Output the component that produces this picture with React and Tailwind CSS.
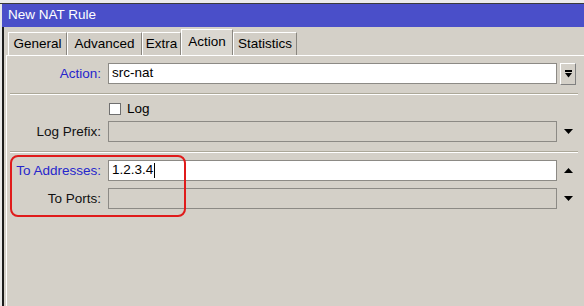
import React from "react";

function Arrow({ up = false }) {
  return (
    <svg width="9" height="5" viewBox="0 0 9 5" className="block">
      <path d={up ? "M4.5 0 L9 5 L0 5 Z" : "M0 0 L9 0 L4.5 5 Z"} fill="#000" />
    </svg>
  );
}

function Row({ label, blue, disabled, value, caret, side, className = "" }) {
  return (
    <div className={`flex items-center h-[21px] ${className}`}>
      <div className={`w-[94px] text-right leading-none text-[13.5px] ${blue ? "text-[#2626cc]" : "text-[#111]"}`}>{label}</div>
      <div
        className={`ml-[7px] w-[449px] h-full flex items-center pl-[3px] border border-[#8c8a85] text-[13.5px] ${
          disabled ? "bg-[#d4d0c8]" : "bg-white"
        }`}
      >
        {value}
        {caret && <span className="ml-[1px] w-[1px] h-[15px] bg-black" />}
      </div>
      <div className="ml-[3px] w-[16px] flex justify-center">{side}</div>
    </div>
  );
}

function Separator({ className = "" }) {
  return <div className={`ml-[3px] w-[568px] h-[2px] border-t border-[#aca899] border-b border-b-white ${className}`} />;
}

const tabs = [
  { name: "General", w: "w-[59px]" },
  { name: "Advanced", w: "w-[75px]" },
  { name: "Extra", w: "w-[39px]" },
  { name: "Action", w: "w-[52px]", active: true },
  { name: "Statistics", w: "w-[64px]" },
];

export default function App() {
  return (
    <div className="w-[584px] h-[306px] overflow-hidden bg-[#d4d0c8] relative flex flex-col text-[13px] text-black font-['Liberation_Sans',Arial,sans-serif]">
      {/* window behind */}
      <div className="h-[4px] bg-[#ebebeb] border-b border-[#3a3a3a] shrink-0" />

      <div className="flex flex-1">
        <div className="w-[2px] bg-[#e8e8e8]" />
        <div className="flex-1 flex flex-col">
          {/* Title bar */}
          <div className="h-[23px] bg-[#4a4fc9] text-white flex items-center pl-[6px] text-[13.5px] shrink-0">New NAT Rule</div>

          <div className="flex-1 flex flex-col border-l-2 border-[#1c1c1c]">
            {/* Tabs */}
            <div className="h-[28px] flex items-end pl-[4px] shrink-0">
              {tabs.map((t) => (
                <div
                  key={t.name}
                  className={`${t.w} flex items-center justify-center border-l border-t border-white border-r border-r-[#8a8780] text-[13.5px] ${
                    t.active ? "h-[26px] bg-[#dad7d0]" : "h-[23px] bg-[#d2cec6]"
                  }`}
                >
                  {t.name}
                </div>
              ))}
            </div>

            {/* Panel */}
            <div className="flex-1 ml-[2px] border-t border-l border-white pt-[7px]">
              <Row
                label="Action:"
                blue
                value="src-nat"
                side={
                  <div className="w-[16px] h-[22px] border border-t-white border-l-white border-r-[#808080] border-b-[#808080] bg-[#d4d0c8] flex flex-col items-center justify-center gap-[1px]">
                    <div className="w-[7px] h-[2px] bg-black" />
                    <svg width="7" height="5" viewBox="0 0 7 5" className="block">
                      <path d="M0 0 L7 0 L3.5 4.5 Z" fill="#000" />
                    </svg>
                  </div>
                }
              />
              <Separator className="mt-[9px]" />

              <div className="mt-[4px] h-[20px] flex items-center">
                <div className="ml-[102px] w-[12px] h-[12px] bg-white border border-[#6f6f6f]" />
                <span className="ml-[6px] text-[13.5px]">Log</span>
              </div>

              <Row label="Log Prefix:" disabled side={<Arrow />} className="mt-[2px]" />
              <Separator className="mt-[9px]" />

              <Row label="To Addresses:" blue value="1.2.3.4" caret side={<Arrow up />} className="mt-[7px]" />
              <Row label="To Ports:" disabled side={<Arrow />} className="mt-[7px]" />
            </div>
          </div>
        </div>
      </div>

      {/* Annotation */}
      <div className="absolute left-[10px] top-[155px] w-[176px] h-[62px] border-2 border-[#e01b1b] rounded-[8px]" />
    </div>
  );
}
